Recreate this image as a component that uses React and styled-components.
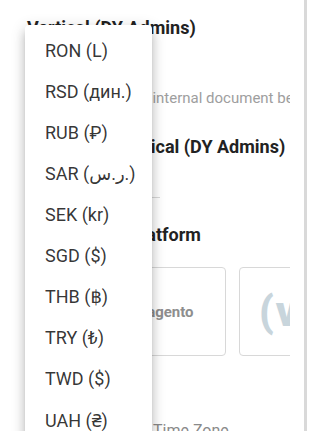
import React from 'react'
import styled, { createGlobalStyle } from 'styled-components'

const GlobalStyle = createGlobalStyle`
  html, body {
    margin: 0;
    padding: 0;
    background: #ffffff;
  }
  body {
    font-family: Roboto, "Noto Sans", "DejaVu Sans", sans-serif;
    color: #212121;
  }
`

const Page = styled.div`
  position: relative;
  display: flex;
  width: 311px;
  height: 431px;
  overflow: hidden;
  background: #ffffff;
`

const Panel = styled.div`
  width: 307px;
  height: 100%;
  display: flex;
  border-right: 3px solid #d9d9d9;
  box-sizing: border-box;
`

const Content = styled.div`
  width: 290px;
  height: 100%;
  overflow: hidden;
  padding-left: 27px;
  box-sizing: border-box;
  display: flex;
  flex-direction: column;

  & > * {
    flex-shrink: 0;
  }
`

const Heading = styled.div`
  margin-top: ${p => p.top}px;
  font-size: 18px;
  line-height: 20px;
  font-weight: 700;
  color: #222222;
  white-space: nowrap;
`

const SelectBox = styled.div`
  margin-top: 8px;
  width: 118px;
  height: 36px;
  border: 1px solid #d6d6d6;
  border-radius: 4px;
  box-sizing: border-box;
`

const Description = styled.div`
  margin-top: 6px;
  font-size: 15px;
  line-height: 20px;
  color: #9e9e9e;
  white-space: pre;
`

const Field = styled.div`
  margin-top: 8px;
  width: 133px;
  height: 33px;
  border-bottom: 1px solid #d9d9d9;
  box-sizing: border-box;
`

const CardRow = styled.div`
  margin-top: 22px;
  display: flex;
  gap: 13px;
`

const Card = styled.div`
  flex: 0 0 199px;
  height: 89px;
  border: 1px solid #d8d8d8;
  border-radius: 4px;
  box-sizing: border-box;
  display: flex;
  align-items: center;
  padding-left: ${p => p.inset}px;
`

const WordMark = styled.span`
  font-size: 15px;
  font-weight: 700;
  color: #8e8e8e;
  white-space: nowrap;
`

const BracketLogo = styled.span`
  font-size: 42px;
  line-height: 1;
  font-weight: 900;
  color: #c8d5dc;
  letter-spacing: 2px;
  white-space: nowrap;
`

const LabelRow = styled.div`
  margin-top: 65px;
  display: grid;
  grid-template-columns: 126px 1fr;
  font-size: 16px;
  line-height: 20px;
  color: #8a8a8a;
  white-space: nowrap;
`

const Menu = styled.ul`
  position: absolute;
  left: 25px;
  top: 25px;
  width: 127px;
  height: 440px;
  margin: 0;
  padding: 5px 0 0;
  list-style: none;
  background: #ffffff;
  border-radius: 4px;
  box-shadow: 0 5px 5px -3px rgba(0, 0, 0, 0.2), 0 8px 10px 1px rgba(0, 0, 0, 0.14),
    0 3px 14px 2px rgba(0, 0, 0, 0.12);
`

const MenuItem = styled.li`
  height: 41px;
  display: flex;
  align-items: center;
  padding-left: 20px;
  font-size: 18px;
  color: rgba(0, 0, 0, 0.8);
  white-space: nowrap;
`

const currencies = [
  'RON (L)',
  'RSD (дин.)',
  'RUB (₽)',
  'SAR (ر.س.)',
  'SEK (kr)',
  'SGD ($)',
  'THB (฿)',
  'TRY (₺)',
  'TWD ($)',
  'UAH (₴)',
]

export default function App() {
  return (
    <>
      <GlobalStyle />
      <Page>
        <Panel>
          <Content>
            <Heading top={18}>Vertical (DY Admins)</Heading>
            <SelectBox />
            <Description>Currency used for  internal document between sections</Description>
            <Heading top={29}>Belongs in Vertical (DY Admins)</Heading>
            <Field />
            <Heading top={27}>Select Store Platform</Heading>
            <CardRow>
              <Card inset={106}>
                <WordMark>Magento</WordMark>
              </Card>
              <Card inset={19}>
                <BracketLogo>(v</BracketLogo>
              </Card>
            </CardRow>
            <LabelRow>
              <span>Language</span>
              <span>Time Zone</span>
            </LabelRow>
          </Content>
        </Panel>
        <Menu>
          {currencies.map(c => (
            <MenuItem key={c}>{c}</MenuItem>
          ))}
        </Menu>
      </Page>
    </>
  )
}
